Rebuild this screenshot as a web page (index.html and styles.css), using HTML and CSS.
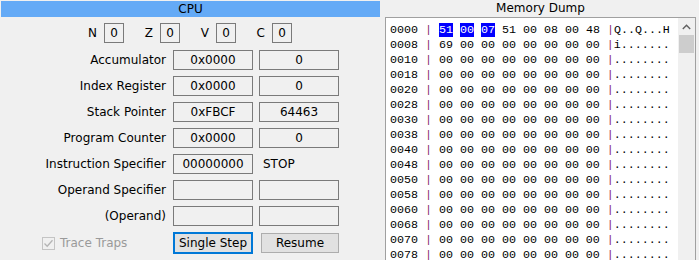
FILE: index.html
```html
<!DOCTYPE html>
<html>
<head>
<meta charset="utf-8">
<link rel="stylesheet" href="styles.css">
</head>
<body>
<div class="app">
  <section class="cpu">
    <div class="cpu-title">CPU</div>
    <div class="flags">
      <div class="flag"><span class="flag-label">N</span><span class="flag-box">0</span></div>
      <div class="flag"><span class="flag-label">Z</span><span class="flag-box">0</span></div>
      <div class="flag"><span class="flag-label">V</span><span class="flag-box">0</span></div>
      <div class="flag"><span class="flag-label">C</span><span class="flag-box">0</span></div>
    </div>
    <div class="regs">
      <div class="reg-label">Accumulator</div><div class="field">0x0000</div><div class="field">0</div>
      <div class="reg-label">Index Register</div><div class="field">0x0000</div><div class="field">0</div>
      <div class="reg-label">Stack Pointer</div><div class="field">0xFBCF</div><div class="field">64463</div>
      <div class="reg-label">Program Counter</div><div class="field">0x0000</div><div class="field">0</div>
      <div class="reg-label">Instruction Specifier</div><div class="field">00000000</div><div class="plain">STOP</div>
      <div class="reg-label">Operand Specifier</div><div class="field"></div><div class="field"></div>
      <div class="reg-label">(Operand)</div><div class="field"></div><div class="field"></div>
      <div class="trace">
        <span class="checkbox"><svg width="11" height="11" viewBox="0 0 11 11"><path d="M1.5 5.5 L4.2 8.2 L9.5 2.2" fill="none" stroke="#b4b4b4" stroke-width="1.3"/></svg></span>
        <span class="trace-text">Trace Traps</span>
      </div>
      <div class="btn-cell"><button class="btn btn-focus">Single Step</button></div>
      <div class="btn-cell"><button class="btn btn-resume">Resume</button></div>
    </div>
  </section>
  <section class="mem">
    <div class="mem-title">Memory Dump</div>
    <div class="mem-box">
      <div class="mem-text">
        <div class="mrow">0000 <span class="sep">|</span> <span class="hl">51</span> <span class="hl">00</span> <span class="hl">07</span> 51 00 08 00 48 <span class="sep">|</span>Q..Q...H</div>
        <div class="mrow">0008 <span class="sep">|</span> 69 00 00 00 00 00 00 00 <span class="sep">|</span>i.......</div>
        <div class="mrow">0010 <span class="sep">|</span> 00 00 00 00 00 00 00 00 <span class="sep">|</span>........</div>
        <div class="mrow">0018 <span class="sep">|</span> 00 00 00 00 00 00 00 00 <span class="sep">|</span>........</div>
        <div class="mrow">0020 <span class="sep">|</span> 00 00 00 00 00 00 00 00 <span class="sep">|</span>........</div>
        <div class="mrow">0028 <span class="sep">|</span> 00 00 00 00 00 00 00 00 <span class="sep">|</span>........</div>
        <div class="mrow">0030 <span class="sep">|</span> 00 00 00 00 00 00 00 00 <span class="sep">|</span>........</div>
        <div class="mrow">0038 <span class="sep">|</span> 00 00 00 00 00 00 00 00 <span class="sep">|</span>........</div>
        <div class="mrow">0040 <span class="sep">|</span> 00 00 00 00 00 00 00 00 <span class="sep">|</span>........</div>
        <div class="mrow">0048 <span class="sep">|</span> 00 00 00 00 00 00 00 00 <span class="sep">|</span>........</div>
        <div class="mrow">0050 <span class="sep">|</span> 00 00 00 00 00 00 00 00 <span class="sep">|</span>........</div>
        <div class="mrow">0058 <span class="sep">|</span> 00 00 00 00 00 00 00 00 <span class="sep">|</span>........</div>
        <div class="mrow">0060 <span class="sep">|</span> 00 00 00 00 00 00 00 00 <span class="sep">|</span>........</div>
        <div class="mrow">0068 <span class="sep">|</span> 00 00 00 00 00 00 00 00 <span class="sep">|</span>........</div>
        <div class="mrow">0070 <span class="sep">|</span> 00 00 00 00 00 00 00 00 <span class="sep">|</span>........</div>
        <div class="mrow">0078 <span class="sep">|</span> 00 00 00 00 00 00 00 00 <span class="sep">|</span>........</div>
      </div>
      <div class="scrollbar">
        <div class="sb-up"><svg width="9" height="6" viewBox="0 0 9 6"><path d="M0.8 5 L4.5 1.3 L8.2 5" fill="none" stroke="#606060" stroke-width="1.4"/></svg></div>
        <div class="sb-thumb"></div>
      </div>
    </div>
  </section>
</div>
</body>
</html>
```

FILE: styles.css
```css
html, body {
  margin: 0;
  padding: 0;
  background: #f0f0f0;
  overflow: hidden;
}
body {
  width: 699px;
  height: 260px;
  font-family: "DejaVu Sans", sans-serif;
  font-size: 12px;
  color: #000;
}
.app {
  display: flex;
  height: 260px;
}
.cpu {
  width: 380px;
  flex: none;
}
.cpu-title {
  margin: 1px 0 0 1px;
  width: 379px;
  height: 16px;
  line-height: 16px;
  background: #64aaf6;
  text-align: center;
}
.flags {
  display: flex;
  margin: 6px 0 0 68px;
  height: 20px;
}
.flag {
  display: flex;
  width: 56px;
  justify-content: flex-end;
  align-items: center;
}
.flag-label {
  margin-right: 7px;
}
.flag-box {
  box-sizing: border-box;
  width: 20px;
  height: 20px;
  border: 1px solid #7a7a7a;
  text-align: center;
  line-height: 18px;
}
.regs {
  display: grid;
  grid-template-columns: 167px 80px 80px;
  grid-template-rows: repeat(7, 20px) 22px;
  column-gap: 6px;
  row-gap: 6px;
  margin-top: 7px;
}
.reg-label {
  text-align: right;
  padding-right: 1px;
  line-height: 20px;
  white-space: nowrap;
}
.field {
  box-sizing: border-box;
  border: 1px solid #7a7a7a;
  height: 20px;
  line-height: 18px;
  text-align: center;
}
.plain {
  line-height: 20px;
  padding-left: 4px;
}
.trace {
  display: flex;
  align-items: center;
  padding-left: 42px;
  color: #9a9a9a;
}
.checkbox {
  box-sizing: border-box;
  width: 13px;
  height: 13px;
  border: 1px solid #c4c4c4;
  display: flex;
  align-items: center;
  justify-content: center;
  margin-right: 5px;
}
.btn-cell {
  display: flex;
  align-items: center;
}
.btn {
  box-sizing: border-box;
  margin: 0;
  padding: 0;
  font-family: "DejaVu Sans", sans-serif;
  font-size: 12px;
  color: #000;
  background: #e1e1e1;
}
.btn-focus {
  width: 80px;
  height: 22px;
  border: 2px solid #0078d7;
}
.btn-resume {
  width: 78px;
  height: 20px;
  margin-left: 2px;
  border: 1px solid #adadad;
}
.mem {
  width: 319px;
  flex: none;
  display: flex;
  flex-direction: column;
}
.mem-title {
  height: 17px;
  flex: none;
  line-height: 16px;
  margin-left: 5px;
  width: 311px;
  text-align: center;
}
.mem-box {
  margin-left: 5px;
  width: 311px;
  flex: 1;
  min-height: 0;
  box-sizing: border-box;
  border: 1px solid #a0a0a0;
  border-bottom: none;
  background: #fff;
  display: flex;
  overflow: hidden;
}
.mem-text {
  flex: 1;
  padding: 5px 0 0 4px;
  font-family: "Liberation Mono", "Courier New", monospace;
  font-size: 11.67px;
  line-height: 15px;
  overflow: hidden;
}
.mrow {
  height: 15px;
  white-space: pre;
}
.sep {
  color: #8a2a6e;
}
.hl {
  background: #0000ff;
  color: #fff;
}
.scrollbar {
  width: 17px;
  flex: none;
  background: #f0f0f0;
  display: flex;
  flex-direction: column;
}
.sb-up {
  height: 17px;
  display: flex;
  align-items: center;
  justify-content: center;
}
.sb-thumb {
  height: 18px;
  margin: 0 1px;
  background: #cdcdcd;
}
```
